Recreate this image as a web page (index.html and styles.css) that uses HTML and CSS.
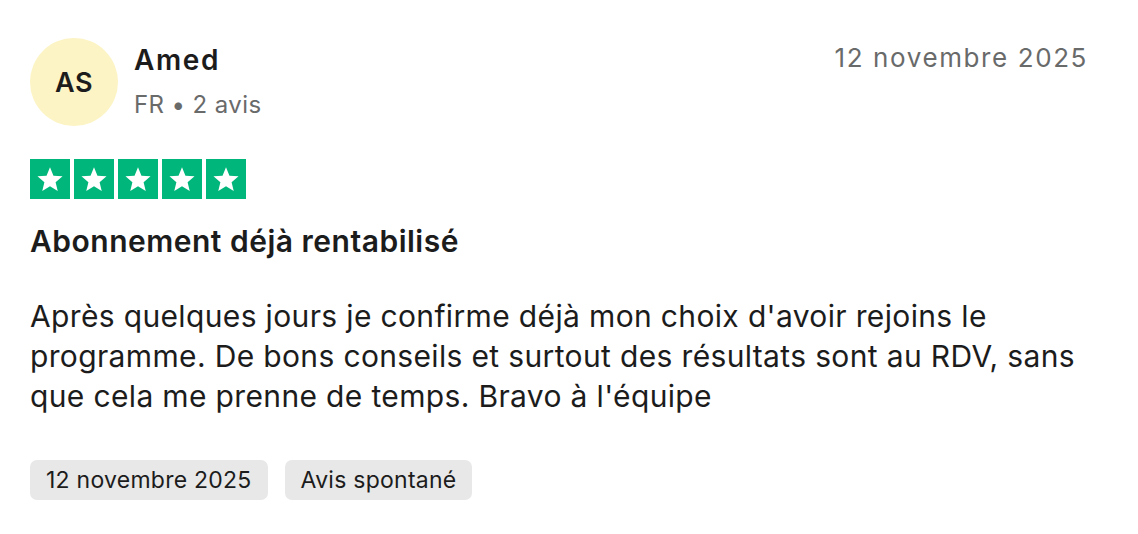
FILE: index.html
```html
<!DOCTYPE html>
<html lang="fr">
<head>
    <meta charset="UTF-8">
    <title>Avis</title>
    <link rel="stylesheet" href="styles.css">
</head>
<body>
    <article class="review">
        <header class="review-head">
            <div class="consumer">
                <div class="avatar">AS</div>
                <div class="consumer-info">
                    <span class="name">Amed</span>
                    <span class="meta">FR • 2 avis</span>
                </div>
            </div>
            <time class="date">12 novembre 2025</time>
        </header>

        <div class="stars">
            <span class="star"><svg viewBox="0 0 24 24"><path d="M12 3.2l2.6 6.3 6.8.5-5.2 4.4 1.6 6.6L12 17.4 6.2 21l1.6-6.6L2.6 10l6.8-.5z"/></svg></span>
            <span class="star"><svg viewBox="0 0 24 24"><path d="M12 3.2l2.6 6.3 6.8.5-5.2 4.4 1.6 6.6L12 17.4 6.2 21l1.6-6.6L2.6 10l6.8-.5z"/></svg></span>
            <span class="star"><svg viewBox="0 0 24 24"><path d="M12 3.2l2.6 6.3 6.8.5-5.2 4.4 1.6 6.6L12 17.4 6.2 21l1.6-6.6L2.6 10l6.8-.5z"/></svg></span>
            <span class="star"><svg viewBox="0 0 24 24"><path d="M12 3.2l2.6 6.3 6.8.5-5.2 4.4 1.6 6.6L12 17.4 6.2 21l1.6-6.6L2.6 10l6.8-.5z"/></svg></span>
            <span class="star"><svg viewBox="0 0 24 24"><path d="M12 3.2l2.6 6.3 6.8.5-5.2 4.4 1.6 6.6L12 17.4 6.2 21l1.6-6.6L2.6 10l6.8-.5z"/></svg></span>
        </div>

        <h2 class="title">Abonnement déjà rentabilisé</h2>
        <p class="text">Après quelques jours je confirme déjà mon choix d'avoir rejoins le programme. De bons conseils et surtout des résultats sont au RDV, sans que cela me prenne de temps. Bravo à l'équipe</p>

        <div class="tags">
            <span class="tag">12 novembre 2025</span>
            <span class="tag">Avis spontané</span>
        </div>
    </article>
</body>
</html>
```

FILE: styles.css
```css
body {
    margin: 0;
    background: #fff;
    font-family: Inter, "Noto Sans", Arial, sans-serif;
    color: #1c1c1c;
}
.review {
    width: 1058px;
    padding: 38px 0 0 30px;
}
.review-head {
    display: flex;
    justify-content: space-between;
    align-items: flex-start;
}
.consumer {
    display: flex;
    align-items: center;
    gap: 16px;
}
.avatar {
    width: 88px;
    height: 88px;
    border-radius: 50%;
    background: #fcf4c4;
    display: flex;
    align-items: center;
    justify-content: center;
    font-size: 27px;
    font-weight: 600;
    letter-spacing: 0.5px;
    color: #1c1c1c;
}
.consumer-info {
    display: flex;
    flex-direction: column;
    gap: 14px;
}
.name {
    font-size: 28px;
    font-weight: 600;
    line-height: 32px;
    letter-spacing: 1.6px;
}
.meta {
    font-size: 24px;
    line-height: 30px;
    letter-spacing: 0.4px;
    color: #696a6a;
}
.date {
    font-size: 26px;
    line-height: 32px;
    letter-spacing: 1.6px;
    color: #696a6a;
    margin-top: 4px;
}
.stars {
    display: flex;
    gap: 4px;
    margin-top: 33px;
}
.star {
    width: 40px;
    height: 40px;
    background: #00b67a;
    display: flex;
    align-items: center;
    justify-content: center;
}
.star svg {
    width: 32px;
    height: 32px;
    fill: #fff;
}
.title {
    font-size: 30px;
    font-weight: 600;
    line-height: 36px;
    letter-spacing: 0.5px;
    margin: 24px 0 0;
}
.text {
    font-size: 30px;
    line-height: 40px;
    letter-spacing: 0.35px;
    margin: 37px 0 0;
}
.tags {
    display: flex;
    gap: 17px;
    margin-top: 44px;
}
.tag {
    background: #e8e8e8;
    border-radius: 7px;
    padding: 0 16px;
    height: 40px;
    line-height: 40px;
    font-size: 23px;
    letter-spacing: 0.25px;
    color: #1c1c1c;
}
```
